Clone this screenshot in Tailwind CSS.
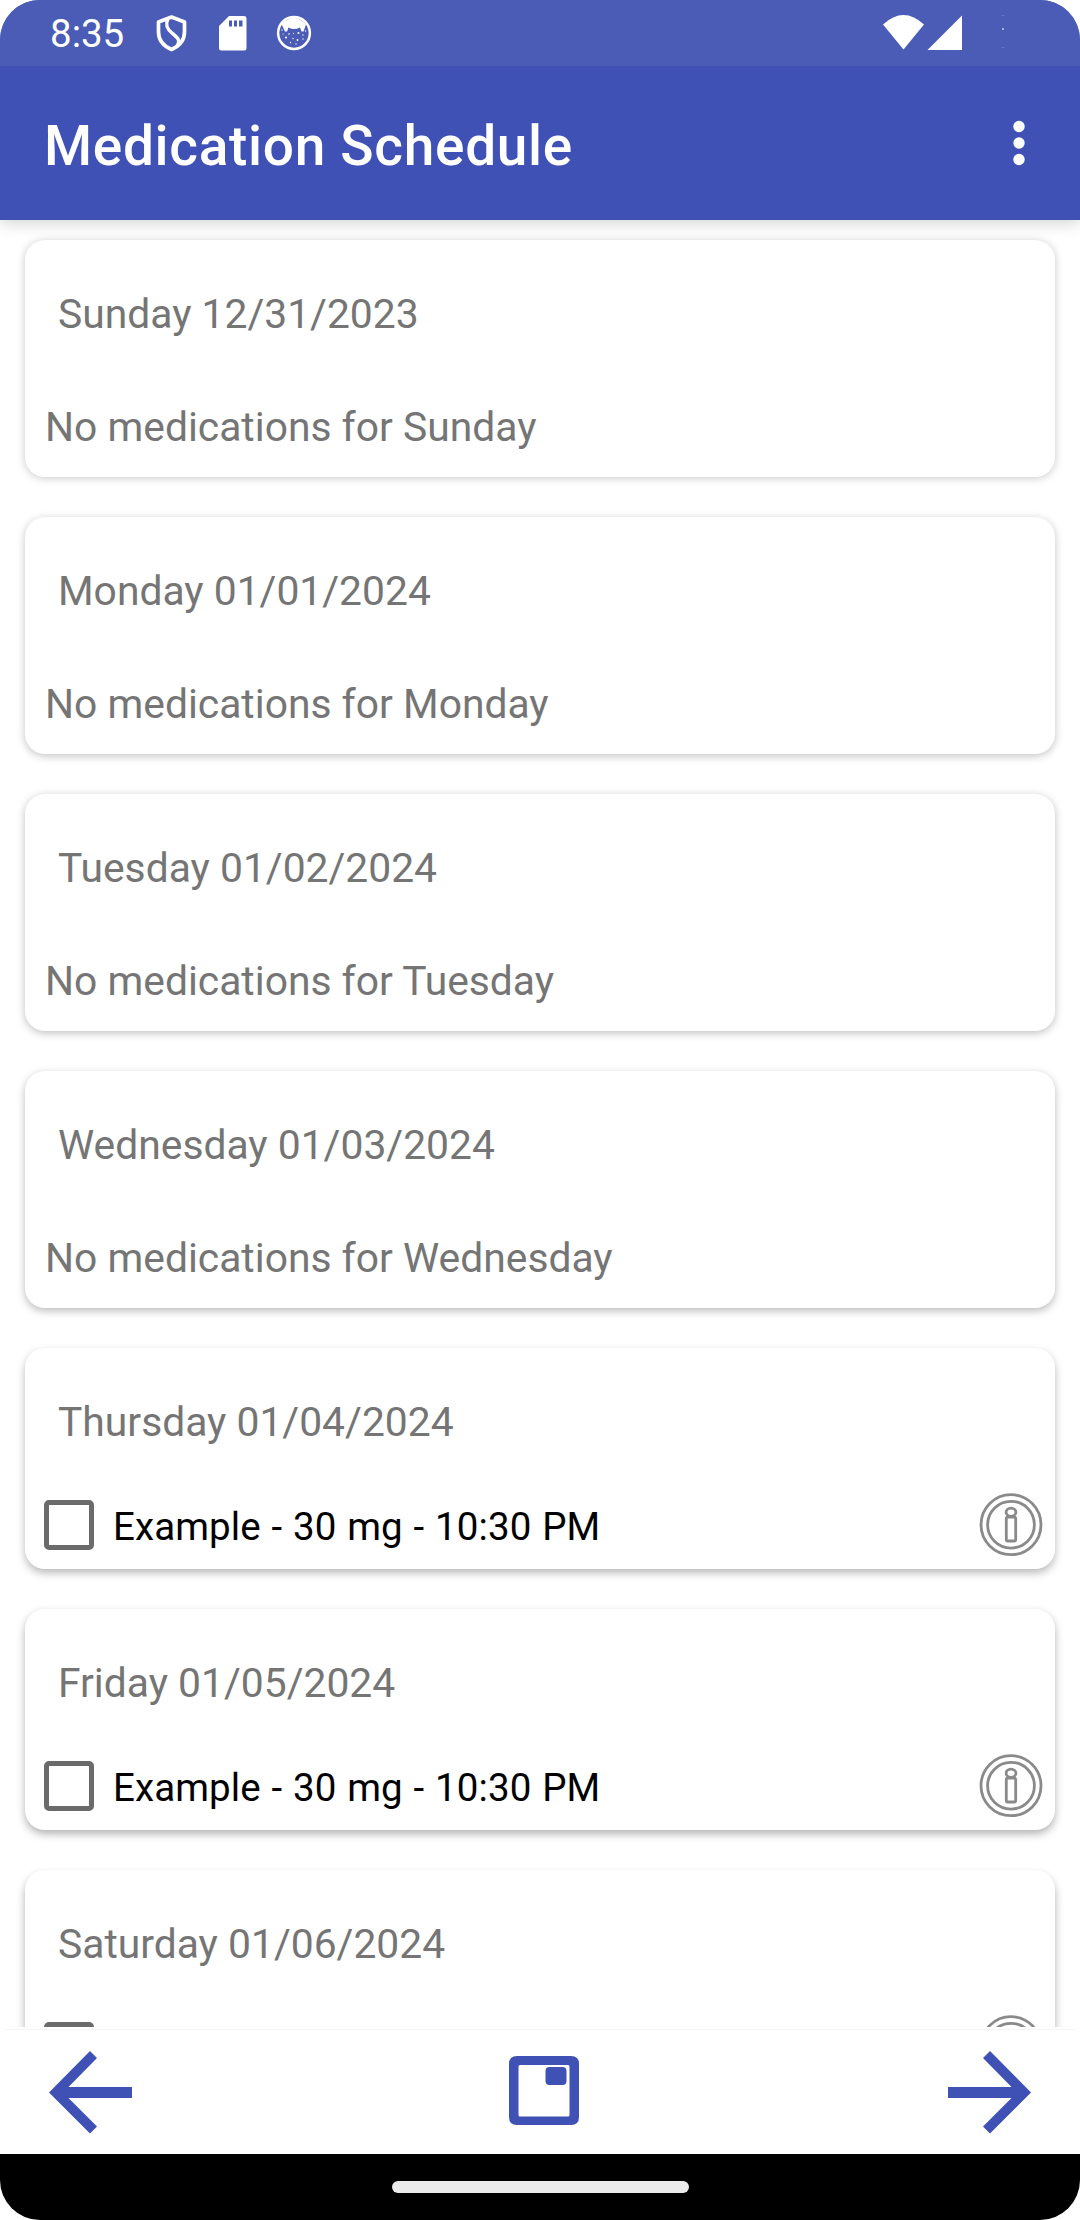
<!DOCTYPE html>
<html lang="en">
<head>
<meta charset="utf-8">
<title>Medication Schedule</title>
<script src="https://cdn.jsdelivr.net/npm/@tailwindcss/browser@4"></script>
</head>
<body class="bg-white">
<svg class="hidden">
  <symbol id="info" viewBox="0 0 66 66">
    <g fill="none" stroke="#8a8a8a" stroke-width="2.8">
      <circle cx="33" cy="32.700" r="30"/>
      <circle cx="33" cy="32.700" r="23.400"/>
      <ellipse cx="33" cy="20.300" rx="4.900" ry="4.100"/>
      <rect x="28.300" y="25.200" width="9.400" height="23.800" rx="1.500"/>
    </g>
  </symbol>
</svg>
<div class="flex h-[2220px] w-[1080px] flex-col overflow-hidden rounded-[40px] bg-white font-[Roboto,sans-serif]">
  <header class="relative z-10 shrink-0 bg-[#3f51b5] shadow-[0_4px_14px_rgba(0,0,0,0.16)]">
    <div class="flex h-[66px] items-center bg-[#4a5cb5] pl-[50px] text-white">
      <span class="w-[106px] pt-[3px] text-[38.5px] leading-none">8:35</span>
      <svg class="h-[38px] w-[32px]" viewBox="0 0 32 38" fill="none" stroke="#fff" stroke-width="3.7"><path d="M15.500 3 28.500 8V18C28.500 26 23.500 32 15.500 35.500 7.500 32 2.500 26 2.500 18V8Z" stroke-linejoin="round"/><path d="M12 4.500C9 11 11 15 16 19 22 24 25 26 20.500 33" stroke-width="3.400"/></svg>
      <svg class="ml-[31px] h-[35px] w-[28px]" viewBox="0 0 28 35"><path fill="#fff" fill-rule="evenodd" d="M10 0H25Q27.500 0 27.500 2.500V32Q27.500 34.500 25 34.500H2.500Q0 34.500 0 32V10ZM10 4.500V10.500H13V4.500ZM15 4.500V10.500H18V4.500ZM20 4.500V10.500H23.500V4.500Z"/></svg>
      <svg class="ml-[29px] h-[36px] w-[36px]" viewBox="0 0 36 36"><circle cx="18" cy="18" r="15.900" fill="none" stroke="#fff" stroke-width="2.500"/><path fill="#fff" d="M5.700 9.500Q18-4 30 9.500L27.500 16.500 25.500 16.500 24 12.500Q18 15.500 12.500 12.500L11 16.500 9 16.500Z"/><g fill="#fff"><circle cx="6" cy="15" r=".7"/><circle cx="13" cy="19" r=".8"/><circle cx="22.500" cy="18" r="1"/><circle cx="10" cy="22.500" r="1.100"/><circle cx="17" cy="23.500" r=".7"/><circle cx="27" cy="20" r=".7"/><circle cx="21.500" cy="25" r=".9"/><circle cx="27" cy="24" r=".7"/><circle cx="14.500" cy="27.500" r=".7"/><circle cx="20" cy="29" r=".7"/><circle cx="7" cy="19" r=".6"/><circle cx="29.500" cy="16" r=".7"/><circle cx="17.500" cy="18.500" r=".6"/></g></svg>
      <svg class="ml-auto h-[36px] w-[80px]" viewBox="0 0 80 36" fill="#fff"><path d="M0 9.500Q20.500-9.500 41 9.500L20.500 34.500Z"/><path d="M79 .500V35H44.500Z"/></svg>
      <svg class="mr-[76px] ml-[39px] h-[36px] w-[2px]" viewBox="0 0 2 36" fill="#fff"><path fill-opacity=".4" d="M.500 0h1v1h-1zM.500 32h1v1h-1z"/><path d="M.500 13h1v2h-1z"/></svg>
    </div>
    <div class="flex h-[154px] items-center justify-between pr-[50px] pl-[44px]">
      <h1 class="pt-[7px] text-[55px] leading-none font-medium tracking-[0.69px] text-white">Medication Schedule</h1>
      <svg class="h-[46px] w-[22px]" viewBox="0 0 22 46" fill="#fff"><circle cx="11" cy="6.500" r="5.700"/><circle cx="11" cy="23" r="5.700"/><circle cx="11" cy="39.500" r="5.700"/></svg>
    </div>
  </header>

  <main id="days" class="flex h-[1807px] shrink-0 flex-col gap-[40px] overflow-hidden px-[25px] pt-[20px] text-[40.8px] leading-[48px] text-[#757575]"></main>

  <nav class="mt-[2px] flex h-[125px] shrink-0 items-center justify-between rounded-md border-t border-[#f5f5f5] px-[49px] text-[#3f51b5]">
    <svg class="h-[83px] w-[83px]" viewBox="0 0 83 83" fill="currentColor"><path d="M41 0 48 7 19.500 36H83V47H19.500L48 75.500 41 82.500 0 41.500Z"/></svg>
    <svg class="mb-[2px] ml-[8px] h-[70px] w-[70px]" viewBox="0 0 70 70" fill="currentColor"><path fill-rule="evenodd" d="M8 0H62Q70 0 70 8V61Q70 69 62 69H8Q0 69 0 61V8Q0 0 8 0ZM11 9Q9.500 9 9.500 10.500V59Q9.500 60.500 11 60.500H59Q60.500 60.500 60.500 59V10.500Q60.500 9 59 9Z"/><rect x="36.500" y="11" width="21" height="18" rx="4"/></svg>
    <svg class="h-[83px] w-[83px]" viewBox="0 0 83 83" fill="currentColor"><path d="M42 0 35 7 63.500 36H0V47H63.500L35 75.500 42 82.500 83 41.500Z"/></svg>
  </nav>
  <footer class="flex h-[66px] shrink-0 justify-center bg-black pt-[27px]"><div class="h-[12px] w-[297px] rounded-full bg-[#ebebeb]"></div></footer>
</div>
<script>
  const shadows = [
    'shadow-[0_1px_8px_rgba(0,0,0,0.22)]',
    'shadow-[0_2px_8px_rgba(0,0,0,0.24)]',
    'shadow-[0_2px_8px_rgba(0,0,0,0.26)]',
    'shadow-[0_3px_8px_rgba(0,0,0,0.27)]',
    'shadow-[0_4px_9px_rgba(0,0,0,0.28)]',
    'shadow-[0_4px_9px_rgba(0,0,0,0.30)]',
    'shadow-[0_5px_9px_rgba(0,0,0,0.31)]',
  ];
  const days = [
    ['Sunday', '12/31/2023'], ['Monday', '01/01/2024'], ['Tuesday', '01/02/2024'], ['Wednesday', '01/03/2024'],
    ['Thursday', '01/04/2024', 'Example - 30 mg - 10:30 PM'],
    ['Friday', '01/05/2024', 'Example - 30 mg - 10:30 PM'],
    ['Saturday', '01/06/2024'],
  ];
  document.getElementById('days').innerHTML = days.map(([day, date, med], i) => `
    <section class="${i > 3 ? 'h-[221px]' : 'h-[237px]'} ${shadows[i]} shrink-0 rounded-[20px] bg-white pt-[50px]">
      <h2 class="pl-[33px]">${day} ${date}</h2>
      ${i > 3
        ? `<div class="mt-[46px] flex h-[66px] items-center pr-[11px] pl-[19px]">
             <span class="h-[50px] w-[50px] rounded-[5px] border-[5px] border-[#6b6b6b]"></span>
             <span class="ml-[19px] pt-[3px] text-[38.5px] tracking-[0.1px] text-black [word-spacing:1.1px]">${med || ''}</span>
             <svg class="ml-auto h-[66px] w-[66px]"><use href="#info"/></svg>
           </div>`
        : `<p class="mt-[65px] pl-[20px]">No medications for ${day}</p>`}
    </section>`).join('');
</script>
</body>
</html>
